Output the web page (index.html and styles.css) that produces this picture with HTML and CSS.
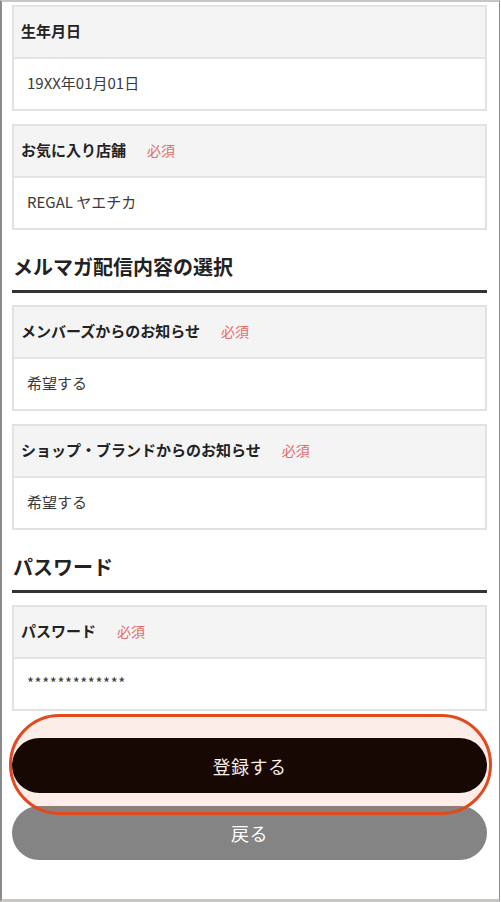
FILE: index.html
```html
<!DOCTYPE html>
<html lang="ja">
<head>
<meta charset="utf-8">
<title>会員情報確認</title>
<link rel="stylesheet" href="styles.css">
</head>
<body>
<div class="frame">
  <div class="content">
    <div class="card">
      <div class="card-head">生年月日</div>
      <div class="card-value">19XX年01月01日</div>
    </div>
    <div class="card">
      <div class="card-head">お気に入り店舗<span class="req">必須</span></div>
      <div class="card-value">REGAL ヤエチカ</div>
    </div>

    <h2 class="section-title">メルマガ配信内容の選択</h2>
    <div class="card">
      <div class="card-head">メンバーズからのお知らせ<span class="req">必須</span></div>
      <div class="card-value">希望する</div>
    </div>
    <div class="card">
      <div class="card-head">ショップ・ブランドからのお知らせ<span class="req">必須</span></div>
      <div class="card-value">希望する</div>
    </div>

    <h2 class="section-title">パスワード</h2>
    <div class="card">
      <div class="card-head">パスワード<span class="req">必須</span></div>
      <div class="card-value pw">*************</div>
    </div>

    <div class="actions">
      <div class="submit-wrap">
        <button class="btn btn-submit" type="button">登録する</button>
        <div class="highlight"></div>
      </div>
      <button class="btn btn-back" type="button">戻る</button>
    </div>
  </div>
</div>
</body>
</html>
```

FILE: styles.css
```css
html, body {
  margin: 0;
  padding: 0;
  background: #fff;
}

body {
  font-family: "Noto Sans CJK JP", "Noto Sans", sans-serif;
  color: #222;
}

.frame {
  width: 500px;
  height: 902px;
  box-sizing: border-box;
  border-top: 2px solid #c9c5c5;
  border-bottom: 3px solid #c9c5c5;
  border-left: 2px solid #8b8b8b;
  border-right: 1px solid #8b8b8b;
  padding: 3px 0 0 10px;
  overflow: hidden;
}

.content {
  width: 475px;
}

.card {
  border: 2px solid #e2e2e2;
  margin-bottom: 13px;
}

.card-head {
  height: 50px;
  box-sizing: border-box;
  background: #f4f4f4;
  border-bottom: 2px solid #e4e4e4;
  display: flex;
  align-items: center;
  padding: 0 7px 3px;
  font-size: 15px;
  font-weight: bold;
  color: #222;
}

.card-head {
  height: 52px;
}

.req {
  margin-left: 21px;
  font-size: 14px;
  font-weight: normal;
  color: #e46a6a;
}

.card-value {
  height: 50px;
  box-sizing: border-box;
  display: flex;
  align-items: center;
  padding: 0 13px 3px;
  font-size: 15px;
  color: #3a3a3a;
  background: #fff;
}

.card-value.pw {
  letter-spacing: 0.6px;
}

.section-title {
  margin: 0 0 12px;
  padding: 9px 0 8px 1px;
  line-height: 30px;
  font-size: 20px;
  font-weight: bold;
  color: #222;
  border-bottom: 3px solid #333;
}

.actions {
  margin-top: 27px;
  display: flex;
  flex-direction: column;
  gap: 13px;
}

.submit-wrap {
  position: relative;
}

.btn {
  display: block;
  width: 100%;
  height: 55px;
  border: none;
  border-radius: 28px;
  font-family: "Noto Sans CJK JP", "Noto Sans", sans-serif;
  font-size: 18px;
  color: #fff;
  letter-spacing: 0.5px;
  padding: 0;
}

.btn-submit {
  background: #000;
}

.btn-back {
  background: #848484;
  height: 54px;
}

.highlight {
  position: absolute;
  top: -24px;
  bottom: -22px;
  left: -3px;
  right: -5px;
  border: 3px solid #e04a1f;
  border-radius: 999px;
  background: rgba(224, 74, 31, 0.1);
  z-index: 2;
  pointer-events: none;
}
```
